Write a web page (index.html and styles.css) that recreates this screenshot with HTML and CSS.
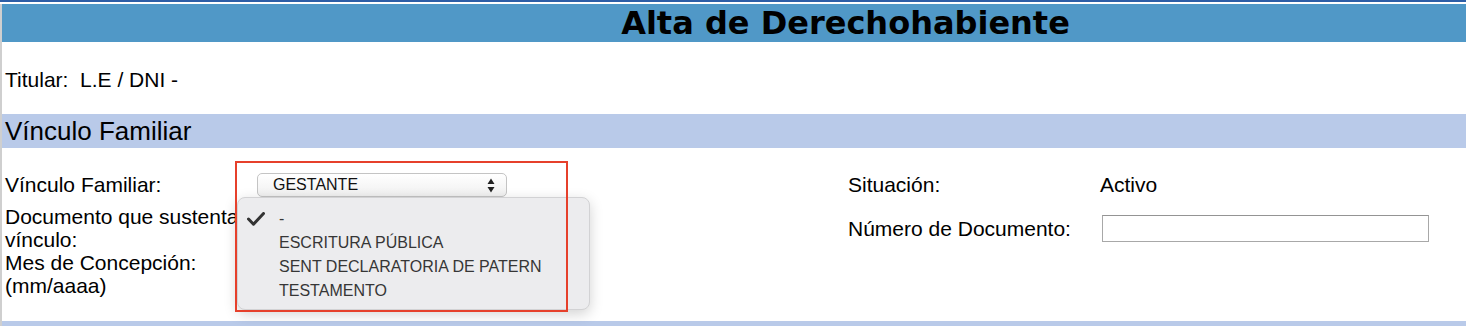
FILE: index.html
```html
<!DOCTYPE html>
<html lang="es">
  <head>
    <meta charset="UTF-8" />
    <meta name="viewport" content="width=device-width, initial-scale=1.0" />
    <title>Alta de Derechohabiente</title>
    <link rel="stylesheet" href="styles.css">
  </head>
  <body>
    <div class="topline"></div>
    <div id="page">
      <div class="header">
        <h1>Alta de Derechohabiente</h1>
      </div>
      <div class="titular">Titular:&nbsp; L.E / DNI -</div>
      <div class="section-bar">Vínculo Familiar</div>

      <div class="form-grid">
        <div class="label">Vínculo Familiar:</div>
        <div class="select-cell">
          <div class="select">
            <span>GESTANTE</span>
            <svg class="arrows" width="8" height="15" viewBox="0 0 8 15">
              <path d="M4 0.5 L7.5 6 L0.5 6 Z M4 14.5 L7.5 9 L0.5 9 Z" fill="#222" />
            </svg>
          </div>
          <ul class="menu">
            <li class="checked">
              <svg class="check" width="18" height="14" viewBox="0 0 18 14">
                <path d="M1.5 7 L6.5 12.2 L16.5 1.5" fill="none" stroke="#333" stroke-width="3" stroke-linecap="round" stroke-linejoin="round" />
              </svg>
              -
            </li>
            <li>ESCRITURA PÚBLICA</li>
            <li>SENT DECLARATORIA DE PATERN</li>
            <li>TESTAMENTO</li>
          </ul>
          <div class="highlight"></div>
        </div>
        <div class="label">Situación:</div>
        <div class="label">Activo</div>

        <div class="label">Documento que sustenta vínculo:</div>
        <div></div>
        <div class="label middle">Número de Documento:</div>
        <div class="middle"><input type="text" class="text-input" /></div>

        <div class="label">Mes de Concepción: (mm/aaaa)</div>
        <div></div>
        <div></div>
        <div></div>
      </div>

      <div class="section-bar next"></div>
    </div>
  </body>
</html>
```

FILE: styles.css
```css
* {
  padding: 0;
  margin: 0;
  box-sizing: border-box;
}
body {
  background-color: white;
  font-family: "Liberation Sans", Arial, sans-serif;
  color: black;
  overflow: hidden;
}
.topline {
  height: 2px;
  margin-bottom: 2px;
  background-color: #2d5ea6;
}
#page {
  border-left: 2px solid #cfcfcf;
}
.header {
  height: 38px;
  background-color: #5098c7;
  padding-left: 223px;
  text-align: center;
}
.header h1 {
  font-family: "DejaVu Sans", Verdana, sans-serif;
  font-size: 32px;
  font-weight: bold;
  line-height: 38px;
}
.titular {
  height: 72px;
  padding: 26px 0 0 3px;
  font-size: 21px;
  line-height: 24px;
}
.section-bar {
  height: 34px;
  padding-left: 3px;
  background-color: #b9cae9;
  font-size: 26px;
  line-height: 34px;
}
.section-bar.next {
  height: 10px;
}
.form-grid {
  display: grid;
  grid-template-columns: 252px 591px 252px 1fr;
  grid-template-rows: 32px auto auto;
  padding: 25px 0 24px 3px;
}
.label {
  font-size: 21px;
  line-height: 23px;
}
.form-grid > .label:nth-child(-n+4) {
  line-height: 24px;
}
.middle {
  align-self: center;
}
.text-input {
  display: block;
  width: 327px;
  height: 27px;
  margin-left: 2px;
  border: 1px solid #a8a8a8;
  border-top-color: #949494;
  background: white;
}

/* fake select + open menu */
.select-cell {
  position: relative;
}
.select {
  display: flex;
  align-items: center;
  justify-content: space-between;
  width: 250px;
  height: 24px;
  padding: 0 11px 0 15px;
  border: 1px solid #c4c4c4;
  border-radius: 5px;
  background: linear-gradient(#ffffff, #f0f0f0);
  font-size: 16px;
  color: #111;
}
.menu {
  position: absolute;
  left: -20px;
  top: 24px;
  width: 353px;
  height: 113px;
  padding: 9px 0 0 41px;
  list-style: none;
  background-color: #ececee;
  border: 1px solid #d2d2d4;
  border-radius: 8px;
  box-shadow: 0 4px 14px rgba(0, 0, 0, 0.18);
  font-size: 16px;
  line-height: 24px;
  color: #363636;
}
.menu li {
  position: relative;
}
.check {
  position: absolute;
  left: -32px;
  top: 5px;
}
.highlight {
  position: absolute;
  left: -22px;
  top: -12px;
  width: 333px;
  height: 151px;
  border: 2.5px solid #e6402b;
}
```
